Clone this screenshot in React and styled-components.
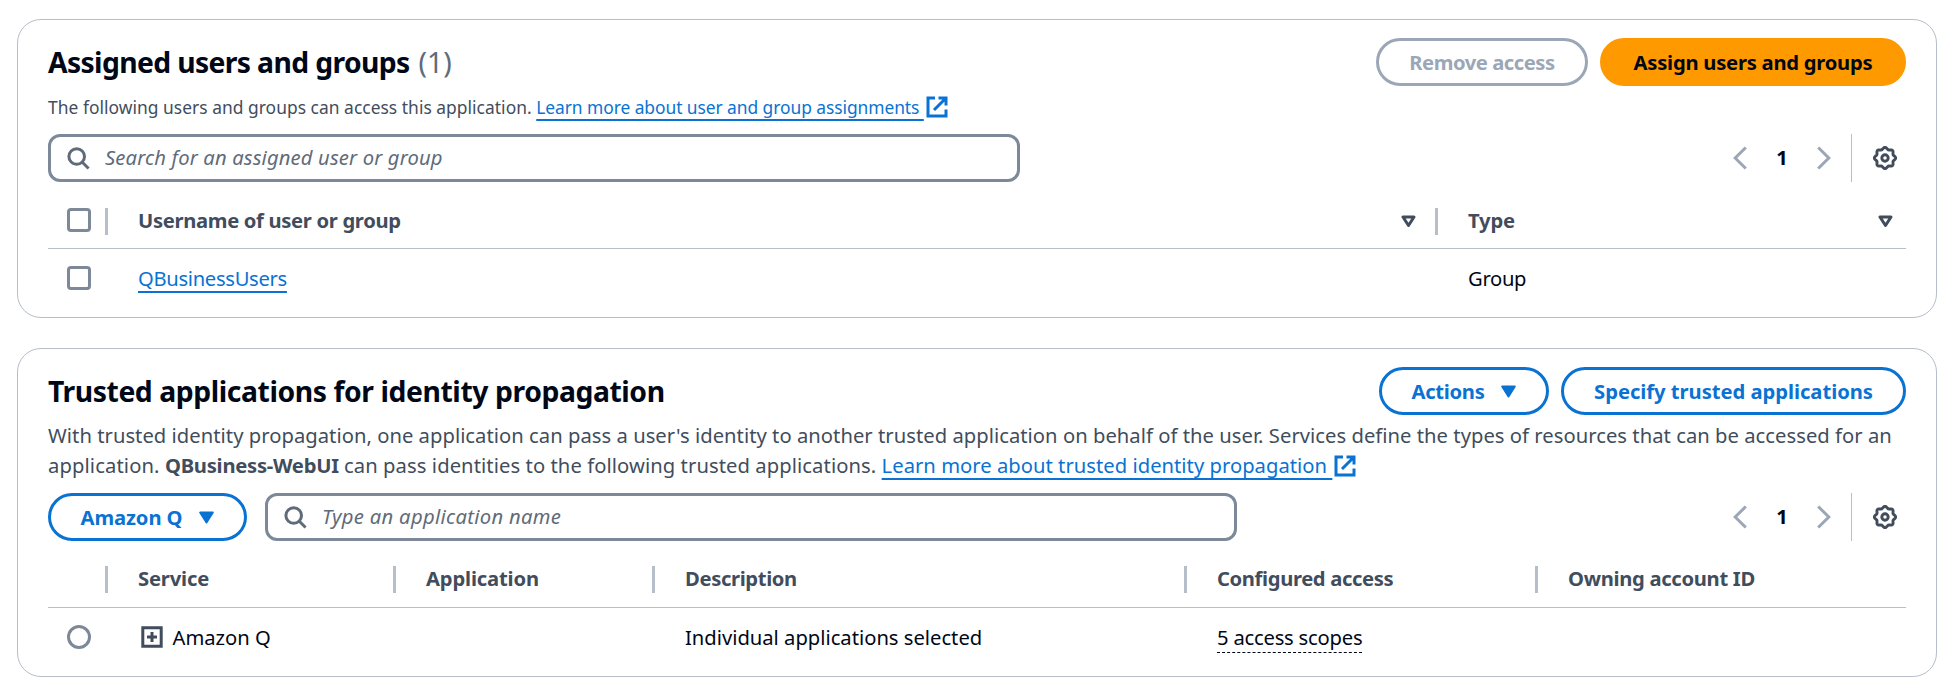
import React from 'react';
import styled, { createGlobalStyle, css } from 'styled-components';

const Global = createGlobalStyle`
  * { box-sizing: border-box; }
  body {
    margin: 0;
    background: #fff;
    color: #000716;
    font-family: "Noto Sans", "Open Sans", sans-serif;
    font-size: 20.2px;
    line-height: 30px;
  }
`;

const Page = styled.main`
  display: flex;
  flex-direction: column;
  gap: 30px;
  width: 1952px;
  padding: 19px 15px 12px 17px;
`;

const Card = styled.section`
  height: ${(p) => p.$height}px;
  padding: 18px 30px 0;
  border: 1px solid #b6bec9;
  border-radius: 24px;
  overflow: hidden;
`;

const Header = styled.header`
  display: flex;
  align-items: center;
  justify-content: space-between;
  height: 48px;
`;

const Title = styled.h2`
  margin: 0;
  font-size: 28.3px;
  font-weight: 700;
  line-height: 36px;
  letter-spacing: ${(p) => p.$track || 0}px;
  white-space: pre;
`;

const Count = styled.span`
  margin-left: 9px;
  font-weight: 400;
  letter-spacing: 0;
  color: #5f6b7a;
`;

const Text = styled.span`
  letter-spacing: ${(p) => p.$track || 0}px;
  white-space: nowrap;
`;

const Copy = styled(Text)`
  white-space: pre;
`;

const Group = styled.div`
  display: flex;
  align-items: center;
  gap: ${(p) => p.$gap}px;
`;

const variants = {
  primary: css`background: #ff9900; border-color: #ff9900; color: #000716;`,
  normal: css`color: #0972d3; border-color: #0972d3;`,
  disabled: css`color: #9ba7b6; border-color: #9ba7b6;`,
};

const Button = styled.button`
  display: inline-flex;
  align-items: center;
  justify-content: center;
  gap: 17px;
  flex: none;
  width: ${(p) => p.$width}px;
  height: 48px;
  padding: 0;
  border: 3px solid;
  border-radius: 24px;
  background: #fff;
  font: inherit;
  font-weight: 700;
  ${(p) => variants[p.$variant]}
`;

const Description = styled.p`
  margin: 0;
  color: #414d5c;
  white-space: pre;
  ${(p) =>
    p.$small
      ? css`height: 48px; padding-top: 6px; font-size: 17.4px;`
      : css`height: 78px; padding-top: 5px;`}
`;

const Strong = styled.b`
  font-weight: 700;
  letter-spacing: ${(p) => p.$track || 0}px;
`;

const Link = styled.a`
  color: #0972d3;
  letter-spacing: ${(p) => p.$track || 0}px;
  text-decoration: underline;
  text-decoration-thickness: 2px;
  text-underline-offset: 5px;
  text-decoration-skip-ink: none;
`;

const Toolbar = styled.div`
  display: flex;
  align-items: center;
  height: 48px;
`;

const SearchBox = styled.label`
  display: flex;
  align-items: center;
  gap: 15px;
  flex: none;
  width: 972px;
  height: 48px;
  margin-left: ${(p) => p.$left || 0}px;
  padding-left: 15px;
  border: 3px solid #7d8998;
  border-radius: 12px;
  color: #5f6b7a;
  font-style: italic;
  span { padding-bottom: 3px; }
`;

const Pager = styled(Group)`
  margin-left: auto;
  height: 48px;
  padding-right: 20px;
  border-right: 1px solid #b6bec9;
`;

const PageNumber = styled.span`
  width: 66px;
  padding-bottom: 2px;
  text-align: center;
  font-weight: 700;
`;

const Settings = styled.span`
  display: flex;
  justify-content: flex-end;
  width: 54px;
  padding-right: 9px;
`;

const Row = styled.div`
  display: grid;
  grid-template-columns: ${(p) => p.$columns};
  align-items: center;
  height: 58px;
`;

const HeadRow = styled(Row)`
  height: 67px;
  padding-top: ${(p) => p.$pad}px;
  padding-bottom: ${(p) => 13 - p.$pad}px;
  border-bottom: 1px solid #b6bec9;
  color: #414d5c;
  font-weight: 700;
`;

const Checkbox = styled.span`
  width: 24px;
  height: 24px;
  border: 3px solid #7d8998;
  border-radius: ${(p) => (p.$round ? '50%' : '4px')};
`;

const HeadCell = styled.div`
  display: flex;
  align-items: center;
  justify-content: space-between;
  height: 27px;
  padding-left: ${(p) => (p.$select ? 19 : 30)}px;
  padding-right: ${(p) => (p.$last ? 13 : p.$sort ? 19 : 0)}px;
  border-right: ${(p) => (p.$last ? 0 : 3)}px solid #b6bec9;
  > ${Text} { padding-bottom: 3px; }
  > ${Checkbox} { margin-bottom: 3px; }
`;

const Cell = styled.div`
  display: flex;
  align-items: center;
  gap: 10px;
  padding-left: ${(p) => (p.$select ? 19 : p.$icon ? 32.5 : 30)}px;
`;

const Popover = styled(Text)`
  line-height: 30px;
  margin-top: 1px;
  border-bottom: 1px dashed #000716;
`;

const Svg = styled.svg`
  display: ${(p) => (p.$inline ? 'inline-block' : 'block')};
  flex: none;
  ${(p) => p.$inline && css`vertical-align: -4px; margin-left: 2px;`}
`;

const SearchIcon = () => (
  <Svg width="24" height="24" fill="none" stroke="#5f6b7a" strokeWidth="3">
    <circle cx="10.7" cy="10.5" r="7.8" />
    <path d="M16.3 16.2 22.6 22.5" />
  </Svg>
);

const Chevron = ({ right }) => (
  <Svg width="14" height="24" fill="none" stroke="#9ba7b6" strokeWidth="3">
    <path d={right ? 'M1.2 1.5 11.8 12 1.2 22.5' : 'M12.8 1.5 2.2 12 12.8 22.5'} />
  </Svg>
);

const gearPath =
  Array.from({ length: 96 }, (_, i) => {
    const a = (i / 96) * Math.PI * 2;
    const r = 9.7 + 0.95 * Math.cos(8 * a);
    return `${i ? 'L' : 'M'}${(12 + r * Math.cos(a)).toFixed(2)} ${(12 + r * Math.sin(a)).toFixed(2)}`;
  }).join('') + 'Z';

const GearIcon = () => (
  <Svg width="24" height="24" fill="none" stroke="#414d5c" strokeWidth="2.9">
    <path d={gearPath} strokeLinejoin="round" />
    <circle cx="12" cy="12" r="3.2" />
  </Svg>
);

const SortIcon = () => (
  <Svg width="15" height="13" fill="none" stroke="#414d5c" strokeWidth="3" strokeLinejoin="round">
    <path d="M2 2H13L7.5 10.5Z" />
  </Svg>
);

const CaretIcon = () => (
  <Svg width="15" height="13" fill="#0972d3" stroke="#0972d3" strokeWidth="2" strokeLinejoin="round">
    <path d="M1.2 1.5H13.8L7.5 11.5Z" />
  </Svg>
);

const ExternalIcon = () => (
  <Svg $inline width="22" height="22" fill="none" stroke="#0972d3" strokeWidth="3">
    <path d="M9 2H2V20H20V13.5M12.5 2H20V9.5M19.5 2.5 8 14" />
  </Svg>
);

const ExpandIcon = () => (
  <Svg width="22" height="22" fill="none" stroke="#414d5c" strokeWidth="3">
    <path d="M1.8 1.8H20.2V20.2H1.8Z" />
    <path d="M11 6V16M6 11H16" />
  </Svg>
);

const Pagination = () => (
  <>
    <Pager $gap={2}>
      <Chevron />
      <PageNumber>1</PageNumber>
      <Chevron right />
    </Pager>
    <Settings><GearIcon /></Settings>
  </>
);

const userColumns = '60px 1330px 468px';
const appColumns = '60px 288px 259px 532px 351px 368px';

export default function App() {
  return (
    <>
      <Global />
      <Page>
        <Card $height={299}>
          <Header>
            <Title $track={-0.63}>Assigned users and groups<Count>(1)</Count></Title>
            <Group $gap={12}>
              <Button $variant="disabled" $width={212}><Text $track={-0.45}>Remove access</Text></Button>
              <Button $variant="primary" $width={306}><Text $track={-0.24}>Assign users and groups</Text></Button>
            </Group>
          </Header>
          <Description $small>
            <Copy $track={0.035}>The following users and groups can access this application. </Copy>
            <Link href="#" $track={-0.06}>Learn more about user and group assignments </Link>
            <ExternalIcon />
          </Description>
          <Toolbar>
            <SearchBox><SearchIcon /><Text $track={0.16}>Search for an assigned user or group</Text></SearchBox>
            <Pagination />
          </Toolbar>
          <HeadRow $columns={userColumns} $pad={13}>
            <HeadCell $select><Checkbox /></HeadCell>
            <HeadCell $sort><Text $track={-0.32}>Username of user or group</Text><SortIcon /></HeadCell>
            <HeadCell $last><Text $track={-0.15}>Type</Text><SortIcon /></HeadCell>
          </HeadRow>
          <Row $columns={userColumns}>
            <Cell $select><Checkbox /></Cell>
            <Cell><Link href="#" $track={-0.31}>QBusinessUsers</Link></Cell>
            <Cell><Text $track={-0.3}>Group</Text></Cell>
          </Row>
        </Card>

        <Card $height={329}>
          <Header>
            <Title $track={-0.41}>Trusted applications for identity propagation</Title>
            <Group $gap={12}>
              <Button $variant="normal" $width={170}><Text $track={-0.3}>Actions</Text><CaretIcon /></Button>
              <Button $variant="normal" $width={345}><Text $track={-0.03}>Specify trusted applications</Text></Button>
            </Group>
          </Header>
          <Description>
            <Copy $track={0.038}>With trusted identity propagation, one application can pass a user's identity to another trusted application on behalf of the user. Services define the types of resources that can be accessed for an</Copy>
            <br />
            <Copy $track={0.12}>application. </Copy>
            <Strong $track={-0.26}>QBusiness-WebUI</Strong>
            <Copy $track={0.08}> can pass identities to the following trusted applications. </Copy>
            <Link href="#" $track={0.03}>Learn more about trusted identity propagation </Link>
            <ExternalIcon />
          </Description>
          <Toolbar>
            <Button $variant="normal" $width={199}><Text $track={-0.09}>Amazon Q</Text><CaretIcon /></Button>
            <SearchBox $left={18}><SearchIcon /><Text $track={0.32}>Type an application name</Text></SearchBox>
            <Pagination />
          </Toolbar>
          <HeadRow $columns={appColumns} $pad={12}>
            <HeadCell />
            <HeadCell><Text $track={-0.17}>Service</Text></HeadCell>
            <HeadCell><Text $track={-0.15}>Application</Text></HeadCell>
            <HeadCell><Text $track={-0.35}>Description</Text></HeadCell>
            <HeadCell><Text $track={-0.36}>Configured access</Text></HeadCell>
            <HeadCell $last><Text $track={-0.3}>Owning account ID</Text></HeadCell>
          </HeadRow>
          <Row $columns={appColumns}>
            <Cell $select><Checkbox $round /></Cell>
            <Cell $icon><ExpandIcon /><Text>Amazon Q</Text></Cell>
            <Cell />
            <Cell><Text>Individual applications selected</Text></Cell>
            <Cell><Popover $track={-0.21}>5 access scopes</Popover></Cell>
            <Cell />
          </Row>
        </Card>
      </Page>
    </>
  );
}
